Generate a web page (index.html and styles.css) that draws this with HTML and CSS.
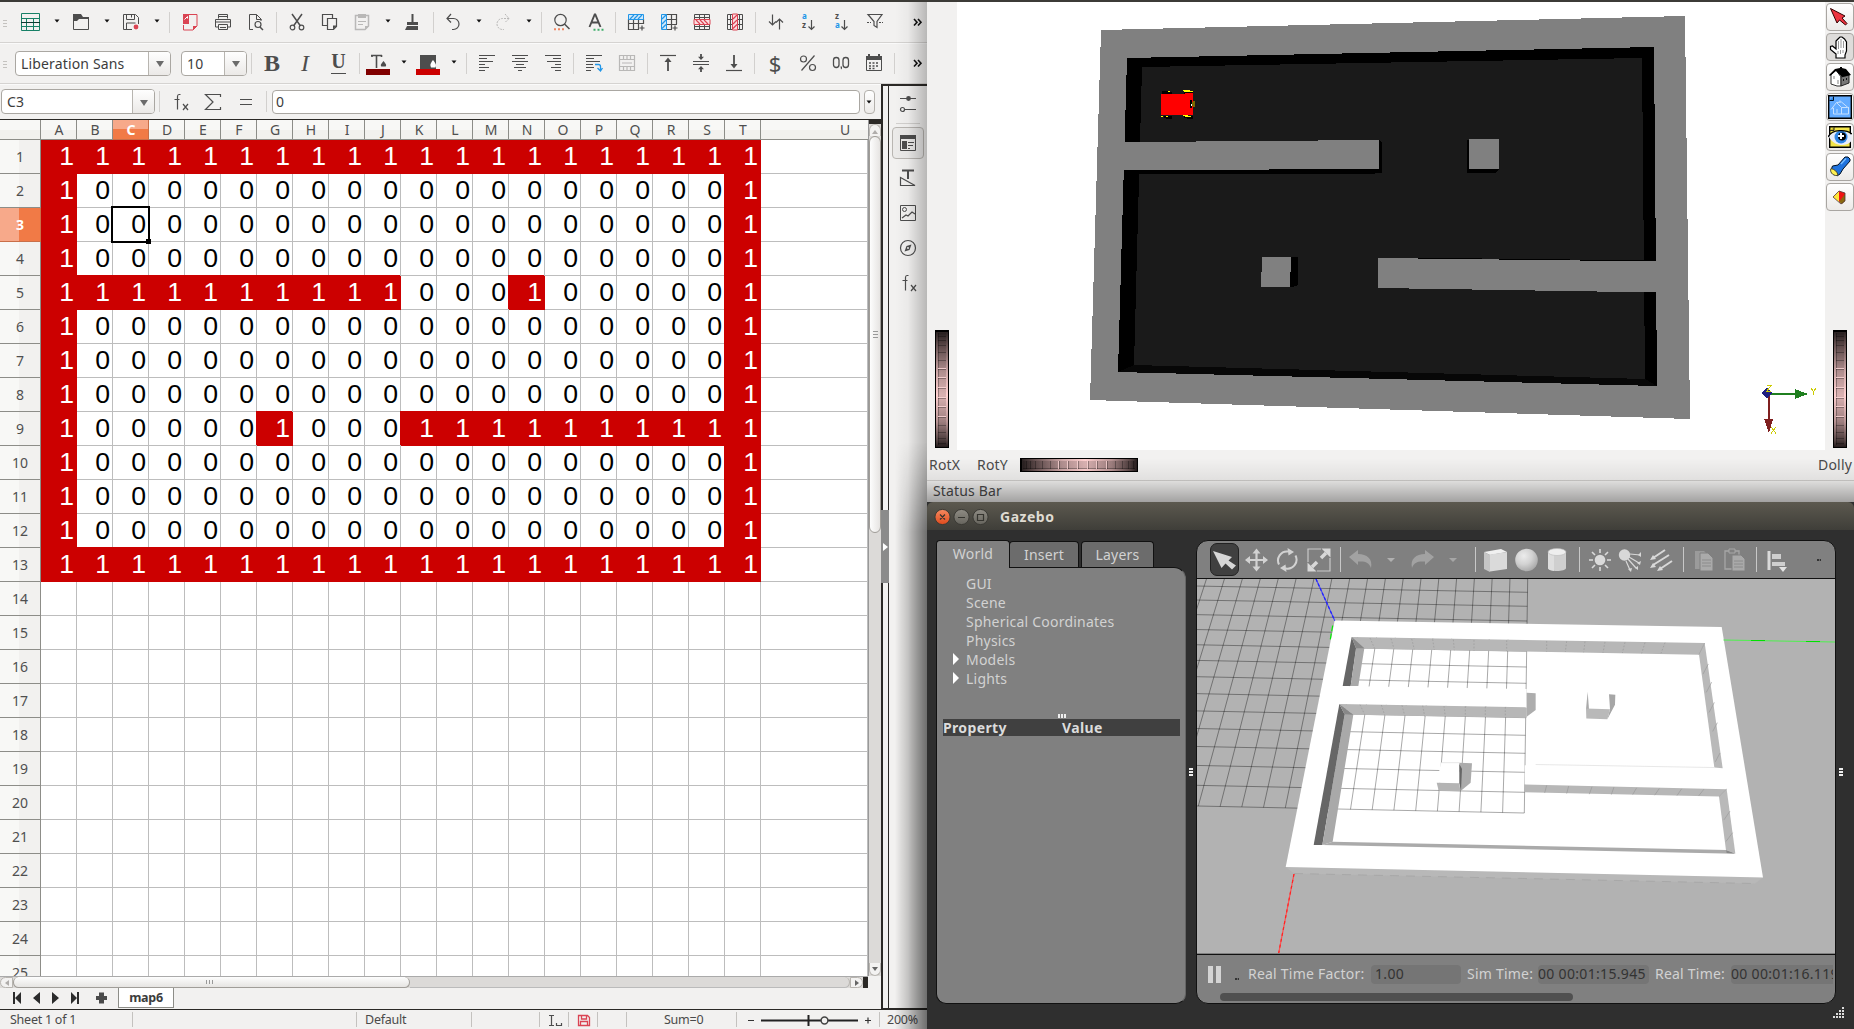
FILE: index.html
```html
<!DOCTYPE html>
<html lang="en">
<head>
<meta charset="utf-8">
<title>map6 - Calc, viewer and Gazebo</title>
<link rel="stylesheet" href="styles.css">
</head>
<body>
<svg class="defs" width="0" height="0">
  <defs>
    <linearGradient id="wheelV" x1="0" y1="0" x2="0" y2="1">
      <stop offset="0" stop-color="#2a2222"/><stop offset=".12" stop-color="#6b5555"/><stop offset=".35" stop-color="#cfa8a8"/>
      <stop offset=".55" stop-color="#ffd0d0"/><stop offset=".78" stop-color="#b89494"/><stop offset=".94" stop-color="#5a4747"/><stop offset="1" stop-color="#241c1c"/>
    </linearGradient>
    <radialGradient id="ball" cx=".38" cy=".32" r=".75"><stop offset="0" stop-color="#ececec"/><stop offset=".5" stop-color="#d2d2d2"/><stop offset="1" stop-color="#a4a4a4"/></radialGradient>
    <linearGradient id="closeBtn" x1="0" y1="0" x2="0" y2="1"><stop offset="0" stop-color="#f58a60"/><stop offset="1" stop-color="#df4a1c"/></linearGradient>
    <linearGradient id="greyBtn" x1="0" y1="0" x2="0" y2="1"><stop offset="0" stop-color="#8f8c84"/><stop offset="1" stop-color="#66645d"/></linearGradient>
    <symbol id="dd" viewBox="0 0 8 24"><path d="M1.500 9.500h5l-2.500 3z" fill="#111"/></symbol>
    <symbol id="more" viewBox="0 0 18 24"><path d="M5 9l3 3.200L5 15.500M9 9l3 3.200L9 15.500" fill="none" stroke="#111" stroke-width="1.600"/></symbol>
    <symbol id="grip" viewBox="0 0 6 24"><path d="M0 10.500h4M0 13.500h4M0 16.500h4" stroke="#c4c2bf"/></symbol>
    <symbol id="fx" viewBox="0 0 24 24"><path d="M10.500 4.500H9Q7.500 4.500 7.500 6.500v13M4.500 9.500h5M13 14l5 6M18 14l-5 6" fill="none" stroke="#4d4d4d" stroke-width="1.200"/></symbol>
    <symbol id="wheel" viewBox="0 0 14 118">
      <rect width="14" height="118" fill="#000"/><rect x="1" y="2" width="12" height="115" fill="url(#wheelV)"/>
      <rect x="3" y="3" width="8" height="112" fill="#000" opacity=".14"/>
      <path d="M3 6.500h8M3 10.500h8M3 15.500h8M3 22.500h8M3 30.500h8M3 39.500h8M3 48.500h8M3 58.500h8M3 68.500h8M3 77.500h8M3 87.500h8M3 95.500h8M3 102.500h8M3 108.500h8M3 113.500h8M3.500 3v112" stroke="#000" stroke-opacity=".3" fill="none"/>
      <path d="M3 38.500h8M3 47.500h8M3 57.500h8M3 67.500h8M3 76.500h8M3 86.500h8" stroke="#ffdada" stroke-opacity=".8"/>
    </symbol>
  </defs>
</svg>

<main class="desktop">
<section class="calc">
  <div class="toolbar standard">
    <svg class="grip"><use href="#grip"/></svg>
    <svg class="ic" viewBox="0 0 24 24"><path d="M3.500 3.500h18v17h-18zM3 8.500h19M3 16.500h19M8.500 9v11M15.500 9v11" fill="none" stroke="#178066"/><path d="M3 12.500h19" stroke="#0c3a2f"/></svg>
    <svg class="dd"><use href="#dd"/></svg>
    <svg class="ic" viewBox="0 0 24 24"><path d="M4.500 7.500v12h15v-12z" fill="none" stroke="#4d4d4d"/><path d="M4 4h8l2 3h6v2H10L8 11H4z" fill="#4d4d4d"/></svg>
    <svg class="dd"><use href="#dd"/></svg>
    <svg class="ic" viewBox="0 0 24 24"><path d="M13 19.500H4.500v-15h12l3 3V14M7.500 5v4.500h8V5M12.500 5v2.500M7.500 19v-6h9" fill="none" stroke="#4d4d4d"/><circle cx="17" cy="17" r="2.400" fill="#da4453"/></svg>
    <svg class="dd"><use href="#dd"/></svg>
    <i class="sep"></i>
    <svg class="ic" viewBox="0 0 24 24"><path d="M10.500 4.500h8.500v11.500l-4 4H5.500V15" fill="none" stroke="#da4453"/><path d="M5 4h6v10H5zM15 20v-4h4z" fill="#da4453"/><path d="M6.500 9.500L9.500 6.500v2" stroke="#fff" fill="none"/></svg>
    <svg class="ic" viewBox="0 0 24 24"><path d="M7.500 8.500v-4h9v4M7.500 17h-3V9.500h15V17h-3M7.500 14.500h9v5h-9z" fill="none" stroke="#4d4d4d"/><path d="M8 6.500h8M4 12h16M9 17.500h6" stroke="#4d4d4d" stroke-width="1.200"/></svg>
    <svg class="ic" viewBox="0 0 24 24"><path d="M9 19.500H5.500v-15h7l4.500 4.500V11M12.500 4.500v5h5" fill="none" stroke="#4d4d4d"/><circle cx="14" cy="14.500" r="3" fill="none" stroke="#4d4d4d" stroke-width="1.200"/><path d="M16 17l3 3" stroke="#4d4d4d" stroke-width="1.500"/></svg>
    <i class="sep"></i>
    <svg class="ic" viewBox="0 0 24 24"><path d="M7 4l8.500 12M17 4L8.500 16" stroke="#4d4d4d" stroke-width="1.500"/><circle cx="7.500" cy="17.500" r="2.300" fill="none" stroke="#4d4d4d" stroke-width="1.200"/><circle cx="16.500" cy="17.500" r="2.300" fill="none" stroke="#4d4d4d" stroke-width="1.200"/></svg>
    <svg class="ic" viewBox="0 0 24 24"><path d="M9 15.500H4.500v-11h10V8M9.500 8.500h9v8l-3 3h-6z" fill="none" stroke="#4d4d4d" stroke-width="1.200"/><path d="M15 19.500v-4h4z" fill="#4d4d4d"/></svg>
    <svg class="ic" viewBox="0 0 24 24"><path d="M5.500 5.500h13V16l-3.500 3.500H5.500z" fill="none" stroke="#b9b8b7" stroke-width="1.500"/><path d="M8 4h8v4H8zM15 20v-4h4z" fill="#b9b8b7"/><path d="M8 11.500h8M8 14.500h5" stroke="#b9b8b7"/></svg>
    <svg class="dd"><use href="#dd"/></svg>
    <svg class="ic" viewBox="0 0 24 24"><path d="M12.500 4v9" stroke="#4d4d4d" stroke-width="2"/><path d="M7 12h11v3H7z" fill="#4d4d4d"/><path d="M7 16h11v4H5z" fill="#4d4d4d"/></svg>
    <i class="sep"></i>
    <svg class="ic" viewBox="0 0 24 24"><path d="M10 4L6 8.500l4 4M6 8.500h6.500a5.500 5.500 0 0 1 0 11H11" fill="none" stroke="#4d4d4d" stroke-width="1.200"/></svg>
    <svg class="dd"><use href="#dd"/></svg>
    <svg class="ic" viewBox="0 0 24 24"><path d="M14 4l4 4.500-4 4M18 8.500h-6.500a5.500 5.500 0 0 0 0 11H13" fill="none" stroke="#b9b8b7" stroke-dasharray="2 1"/></svg>
    <svg class="dd"><use href="#dd"/></svg>
    <i class="sep"></i>
    <svg class="ic" viewBox="0 0 24 24"><circle cx="11.500" cy="10" r="5.700" fill="none" stroke="#4d4d4d" stroke-width="1.200"/><path d="M15.500 14l5 5" stroke="#4d4d4d" stroke-width="1.500"/><path d="M5 19.200h2M9 19.200h2M13 19.200h2" stroke="#f08763" stroke-width="2"/></svg>
    <svg class="ic" viewBox="0 0 24 24"><path d="M6.500 17L11.700 4.500h.6L17.500 17M8.500 12.500h7" fill="none" stroke="#4d4d4d" stroke-width="1.900"/><path d="M10.500 19.800h2M14.500 19.800h2M18.500 19.800h2" stroke="#3fae6a" stroke-width="2"/></svg>
    <i class="sep"></i>
    <svg class="ic" viewBox="0 0 24 24"><path d="M4.500 9v10.500H15M4 13.500h16M9.500 9v10.500M14.500 9v10.500M19.500 9v5M18 15.500v5M15.500 18h5" fill="none" stroke="#4d4d4d" stroke-width="1.200"/><path d="M4.500 4.500h15v5h-15z" fill="#cfe8fa" stroke="#2196e8"/><path d="M6 9l4-4M10 9l4-4M14 9l4-4" stroke="#2196e8" stroke-width="1.200"/></svg>
    <svg class="ic" viewBox="0 0 24 24"><path d="M9 4.500h10.500V14M9 9.500h11M9 14.500h11M9 19.500h6M14.500 4v15M18 15.500v5M15.500 18h5" fill="none" stroke="#4d4d4d" stroke-width="1.200"/><path d="M4.500 4.500h5v15h-5z" fill="#cfe8fa" stroke="#2196e8"/><path d="M5 9l4-4M5 14l4-4M5 18.500l4-4" stroke="#2196e8" stroke-width="1.200"/></svg>
    <svg class="ic" viewBox="0 0 24 24"><path d="M4.500 4.500h15v15h-15zM4 7.500h16M4 16.500h16M9.500 4v16M14.500 4v16" fill="none" stroke="#4d4d4d"/><path d="M4 9.500h16v5H4z" fill="#fbdfe2" stroke="#da4453"/><path d="M6 10l4 4M10 10l4 4M14 10l4 4" stroke="#da4453" stroke-width="1.200"/></svg>
    <svg class="ic" viewBox="0 0 24 24"><path d="M4.500 4.500h15v15h-15zM7.500 4v16M16.500 4v16M4 9.500h16M4 14.500h16" fill="none" stroke="#4d4d4d"/><path d="M9.500 4v16h5V4z" fill="#fbdfe2" stroke="#da4453"/><path d="M10 9l4-4M10 14l4-4M10 18.500l4-4" stroke="#da4453" stroke-width="1.200"/></svg>
    <i class="sep"></i>
    <svg class="ic" viewBox="0 0 24 24"><path d="M8.500 4.500v10M5 11.500l3.500 3.500 3.500-3.500M15.500 19.500v-10M12 12.500L15.500 9l3.500 3.500" fill="none" stroke="#4d4d4d" stroke-width="1.200"/></svg>
    <svg class="ic" viewBox="0 0 24 24"><text x="5" y="9" class="tiny blue">a</text><text x="5" y="18" class="tiny">z</text><path d="M14.500 10v9.500M11.500 16.500l3 3 3-3" fill="none" stroke="#4d4d4d" stroke-width="1.200"/></svg>
    <svg class="ic" viewBox="0 0 24 24"><text x="5" y="9" class="tiny">z</text><text x="5" y="18" class="tiny blue">a</text><path d="M14.500 10v9.500M11.500 16.500l3 3 3-3" fill="none" stroke="#4d4d4d" stroke-width="1.200"/></svg>
    <svg class="ic" viewBox="0 0 24 24"><path d="M5 4.500h14l-5 7v6l-3-2v-4z" fill="none" stroke="#4d4d4d" stroke-width="1.200"/><path d="M4 12.500h4M16 12.500h4" stroke="#4d4d4d" stroke-dasharray="2 1"/></svg>
    <svg class="more"><use href="#more"/></svg>
  </div>

  <div class="toolbar formatting">
    <svg class="grip"><use href="#grip"/></svg>
    <div class="combo font"><span>Liberation Sans</span><b></b></div>
    <div class="combo size"><span>10</span><b></b></div>
    <i class="sep"></i>
    <span class="glyph bold">B</span>
    <span class="glyph ital">I</span>
    <span class="glyph uline">U</span>
    <i class="sep"></i>
    <svg class="ic" viewBox="0 0 24 24"><path d="M5 4.500h11M10.500 4v13M6 4v2M15.500 4v2" fill="none" stroke="#4d4d4d" stroke-width="1.600"/><path d="M17.500 10c3 3.500 3 4 2.200 5.600h-4.400c-.8-1.600-.8-2.100 2.200-5.600z" fill="#4d4d4d"/><path d="M0 18h24v6H0z" fill="#800000"/></svg>
    <svg class="dd"><use href="#dd"/></svg>
    <svg class="ic" viewBox="0 0 24 24"><path d="M4 4h16v14H4z" fill="#4d4d4d"/><path d="M17 9c3 4 3.500 5 2.500 7.500h-4.500c-1-2.500-1-3.500 2-7.500z" fill="#fff"/><path d="M0 18h24v6H0z" fill="#cc0000"/></svg>
    <svg class="dd"><use href="#dd"/></svg>
    <i class="sep"></i>
    <svg class="ic" viewBox="0 0 24 24"><path d="M4 4.500h16M4 7.500h8M4 10.500h14M4 13.500h6M4 16.500h10M4 19.500h6" stroke="#4d4d4d" stroke-width="1.200"/></svg>
    <svg class="ic" viewBox="0 0 24 24"><path d="M4 4.500h16M7 7.500h10M4 10.500h16M8 13.500h8M6 16.500h12M10 19.500h4" stroke="#4d4d4d" stroke-width="1.200"/></svg>
    <svg class="ic" viewBox="0 0 24 24"><path d="M4 4.500h16M12 7.500h8M6 10.500h14M14 13.500h6M10 16.500h10M14 19.500h6" stroke="#4d4d4d" stroke-width="1.200"/></svg>
    <i class="sep"></i>
    <svg class="ic" viewBox="0 0 24 24"><path d="M4 4.500h16M4 7.500h8M4 10.500h14M4 13.500h7M4 16.500h8M4 19.500h5" stroke="#4d4d4d" stroke-width="1.200"/><path d="M13 13.500h3.500q2 0 2 2V19M15.500 17l3 3 2-3" fill="none" stroke="#2196e8" stroke-width="1.300"/></svg>
    <svg class="ic" viewBox="0 0 24 24"><path d="M4.500 4.500h15v15h-15zM4 8.500h16M4 15.500h16M8.500 4v5M12 4v5M15.500 4v5M8.500 15v5M12 15v5M15.500 15v5M7 12h10" fill="none" stroke="#b9b8b7" stroke-width="1.200"/></svg>
    <i class="sep"></i>
    <svg class="ic" viewBox="0 0 24 24"><path d="M4 4.500h16" stroke="#4d4d4d" stroke-width="1.200"/><path d="M12 8v12" stroke="#4d4d4d" stroke-width="1.800"/><path d="M12 6.500l3.500 4.500h-7z" fill="#4d4d4d"/></svg>
    <svg class="ic" viewBox="0 0 24 24"><path d="M4 10.500h16M4 13.500h16" stroke="#4d4d4d" stroke-width="1.200"/><path d="M12 3v4M12 17v4" stroke="#4d4d4d" stroke-width="1.800"/><path d="M12 9L9 5.800h6zM12 15l3 3.200H9z" fill="#4d4d4d"/></svg>
    <svg class="ic" viewBox="0 0 24 24"><path d="M4 19.500h16" stroke="#4d4d4d" stroke-width="1.200"/><path d="M12 4v12" stroke="#4d4d4d" stroke-width="1.800"/><path d="M12 17.500L8.500 13h7z" fill="#4d4d4d"/></svg>
    <i class="sep"></i>
    <span class="glyph cur">$</span>
    <svg class="ic" viewBox="0 0 24 24"><path d="M18.500 4.500l-13 15" stroke="#4d4d4d" stroke-width="1.200"/><circle cx="7.500" cy="8" r="3" fill="none" stroke="#4d4d4d" stroke-width="1.200"/><circle cx="16.500" cy="16.500" r="3" fill="none" stroke="#4d4d4d" stroke-width="1.200"/></svg>
    <svg class="ic" viewBox="0 0 24 24"><rect x="4.500" y="6.500" width="5.500" height="10" rx="2.700" fill="none" stroke="#4d4d4d" stroke-width="1.300"/><rect x="14" y="6.500" width="5.500" height="10" rx="2.700" fill="none" stroke="#4d4d4d" stroke-width="1.300"/><path d="M11.500 15.500h1.500v2l-1 1z" fill="#4d4d4d"/></svg>
    <svg class="ic" viewBox="0 0 24 24"><path d="M4.500 5.500h15v14h-15z" fill="none" stroke="#4d4d4d"/><path d="M4 5h16v4H4zM6 3h2v3H6zM16 3h2v3h-2z" fill="#4d4d4d"/><path d="M7 12h2m1.500 0h2m1.500 0h2M7 15h2m1.500 0h2m1.500 0h2M7 17.500h2m1.500 0h2" stroke="#4d4d4d" stroke-width="1.700"/></svg>
    <i class="sep"></i>
    <svg class="more"><use href="#more"/></svg>
  </div>

  <div class="workspace">
    <div class="editor">
      <div class="formula">
        <div class="combo name"><span>C3</span><b></b></div>
        <i class="sep"></i>
        <svg class="ic" viewBox="0 0 24 24"><use href="#fx"/></svg>
        <svg class="ic" viewBox="0 0 24 24"><path d="M19.500 7V4.500H4.500l7.500 7.500-7.500 7.500h15V17" fill="none" stroke="#4d4d4d" stroke-width="1.200"/></svg>
        <svg class="ic" viewBox="0 0 24 24"><path d="M6 9.500h12M6 14.500h12" stroke="#4d4d4d" stroke-width="1.200"/></svg>
        <i class="sep"></i>
        <div class="input">0</div>
        <div class="expand"><svg class="dd"><use href="#dd"/></svg></div>
      </div>
      <div class="sheetarea">
        <div class="sheet" id="sheet"></div>
        <div class="vscroll"><i class="split"></i><i class="btn up"></i><i class="thumb"></i><i class="trough"></i><i class="btn down"></i></div>
      </div>
      <div class="hscroll"><i class="btn left"></i><i class="thumb"></i><i class="trough"></i><i class="btn right"></i><i class="split"></i></div>
      <div class="tabs">
        <svg width="110" height="20" viewBox="0 0 110 20"><path d="M13 4h2v12h-2zM21 4v12l-6-6zM40 4v12l-7-6zM52 4v12l7-6zM71 4v12l6-6zM77 4h2v12h-2z" fill="#2c2c2c"/><path d="M99 4.500h5v3.500h3v4h-3v3.500h-5V12h-3V8h3z" fill="#4a4a4a"/></svg>
        <span class="tab">map6</span>
      </div>
    </div>
    <div class="divider"><i></i></div>
    <aside class="side">
      <svg class="ic" viewBox="0 0 24 24"><path d="M4 6.500h16M9 17.500h11" stroke="#4d4d4d" stroke-width="1.200"/><circle cx="12.500" cy="6.500" r="2.400" fill="#4d4d4d"/><circle cx="6.500" cy="17.500" r="2" fill="none" stroke="#4d4d4d" stroke-width="1.200"/></svg>
      <i class="rule"></i>
      <div class="deck"><svg class="ic" viewBox="0 0 24 24"><path d="M4.500 4.500h15v15h-15z" fill="none" stroke="#4d4d4d"/><path d="M4 4h16v4H4zM6 10h5v8H6z" fill="#4d4d4d"/><path d="M12 11.500h6M12 14.500h5M12 17.500h2" stroke="#4d4d4d"/></svg></div>
      <svg class="ic" viewBox="0 0 24 24"><path d="M6 4.500h12M12 4v9" stroke="#4d4d4d" stroke-width="2"/><path d="M4.500 11.500v8H19z" fill="none" stroke="#4d4d4d" stroke-width="1.200"/></svg>
      <svg class="ic" viewBox="0 0 24 24"><path d="M4.500 4.500h15v15h-15z" fill="none" stroke="#4d4d4d"/><circle cx="8.500" cy="8.500" r="2" fill="none" stroke="#4d4d4d"/><path d="M6 17l4-3 2 1 4-4 3 2" fill="none" stroke="#4d4d4d" stroke-width="1.200"/></svg>
      <svg class="ic" viewBox="0 0 24 24"><circle cx="12" cy="12" r="7.500" fill="none" stroke="#4d4d4d" stroke-width="1.200"/><path d="M15.500 8.500l-2 5.500-5 1.500 2-5.500z" fill="#4d4d4d"/><circle cx="12" cy="12" r="1" fill="#eee"/></svg>
      <svg class="ic" viewBox="0 0 24 24"><use href="#fx" x="2"/></svg>
    </aside>
  </div>

  <div class="status">
    <span>Sheet 1 of 1</span><i class="sep"></i><i class="sep"></i><span>Default</span><i class="sep"></i><i class="sep"></i>
    <svg width="18" height="16" viewBox="0 0 18 16"><path d="M2 3.500h5M4.500 3v11M2 13.500h5M9.500 11v2.500h5V11" fill="none" stroke="#4d4d4d" stroke-width="1.200"/></svg>
    <i class="sep"></i>
    <svg width="14" height="16" viewBox="0 0 14 16"><path d="M1.500 3.500h9l2 2v8h-11zM4.500 4v3h5V4M3.500 13v-3.500h7V13" fill="none" stroke="#da4453" stroke-width="1.300"/></svg>
    <i class="sep"></i><i class="sep"></i><span>Sum=0</span><i class="sep"></i>
    <svg width="128" height="18" viewBox="0 0 128 18"><path d="M2 9.500h6M119 9.500h6M122 6.500v6" stroke="#333" stroke-width="1.200"/><path d="M15 9.500h97M62.500 4v11" stroke="#222" stroke-width="2"/><circle cx="78.500" cy="9.500" r="3.400" fill="#f2f1f0" stroke="#444" stroke-width="1.500"/></svg>
    <i class="sep"></i><span>200%</span>
  </div>
  <div class="shade"></div>
</section>

<section class="right">
  <div class="viewer">
    <div class="stage">
      <div class="rail"><svg width="14" height="118"><use href="#wheel"/></svg></div>
      <svg class="scene" viewBox="957 2 868 448" shape-rendering="crispEdges">
        <path d="M1101 30L1685 16L1690 419L1090 400z" fill="#808080"/>
        <path d="M1127 58L1654 47L1657 386L1118 372z" fill="#000"/>
        <path d="M1134 365L1645 379L1657 386L1118 372z" fill="#070707"/>
        <path d="M1142 67L1642 58L1645 379L1134 365z" fill="#1a1a1a"/>
        <path d="M1124 170L1139 174H1367L1382 173V143L1379 140z" fill="#000"/>
        <path d="M1100 142.300L1379 140V169L1100 170.300z" fill="#808080"/>
        <path d="M1469 140h-2v33h29l3-4z" fill="#000"/><path d="M1469 139h30v30h-30z" fill="#808080"/>
        <path d="M1290 257h8v28l-6 2h-2z" fill="#000"/><path d="M1262 257h29l-1 30h-29z" fill="#808080"/>
        <path d="M1395 257.500L1656 260.500V262L1395 259z" fill="#000"/>
        <path d="M1378 258L1660 261.500V292.500L1378 288z" fill="#808080"/>
        <path d="M1162 91h6v1h4v2h-10zM1184 92h9v2h-9zM1164 116h8v3h-6v-1h-2zM1184 116h9v3h-6v-1h-3z" fill="#000"/>
        <path d="M1161 94h24v-1h8v22h-32z" fill="#f00"/>
        <path d="M1183 90h7v1h3v1h-9v-1h-1zM1168 91h2v1h-2zM1161 116h2v1h-2zM1166 116h2v1h-2zM1183 115h5v1h3v1h-6v-1h-2z" fill="#ff0"/>
        <path d="M1190 100h2v8h-2z" fill="#000"/><path d="M1192 102h1v-1h2v6h-2v-1h-1z" fill="#7a6a00"/><path d="M1191 104h1v2h-1z" fill="#fff"/>
        <path d="M1767 393h30v2h-30z" fill="#1f7f1f"/><path d="M1795 389l13 5-13 5z" fill="#1f7f1f"/>
        <path d="M1768 395h2v26h-2z" fill="#7f1f1f"/><path d="M1764 419h9l-4 14z" fill="#7f1f1f"/>
        <path d="M1761 393l6-6 5 6-5 6z" fill="#1f1f7f"/>
        <g fill="none" stroke="#cccc00"><path d="M1767 385.500h4l-4 5.500h4M1811 388l2.500 3.500 2.500-3.500M1813.500 391v4M1771 427l5 6.500M1776 427l-5 6.500"/></g>
      </svg>
      <div class="tools">
        <button><svg viewBox="0 0 24 24"><path d="M2.500 3.500L17 11l-3 2 5 5.500-1.500 1.500-6-5-2.500 3z" fill="#ee3340" stroke="#300"/></svg></button>
        <button class="on"><svg viewBox="0 0 24 24"><path d="M8 19l-5.500-4.500v-3l2-.5 3.500 3V6l2-2 2-2h2l2.500 2 2 3v9L17 20v3H8z" fill="#fff" stroke="#000" stroke-width="1.200"/><path d="M10.500 6v8M13 4v9M15.500 6v7M10 16v3M12.500 15v4M15 15v3" stroke="#999"/></svg></button>
        <button><svg viewBox="0 0 24 24"><path d="M3 10l5-5 5 7v9H9l-6-2z" fill="#fff" stroke="#333"/><path d="M13 12l8-2v8l-8 3z" fill="#777" stroke="#222"/><path d="M1 10l6-6 5-1V2h2v1l4 1 5 6-9 2-6-6-6 5z" fill="#000"/><path d="M5 11h2v3H5zM9 15h2v4H9z" fill="#c0c0c0"/><path d="M15 14h1v2h-1zM18 13h1v2h-1z" fill="#111"/></svg></button>
        <button><svg viewBox="0 0 24 24"><path d="M.7.7h22.600v22.600H.7z" fill="#62abff" stroke="#000" stroke-width="1.400"/><path d="M1.500 5.500h4v-4" fill="#2f86e6" stroke="#012"/><path d="M3 14.500l5.500-7 5-.5 7 6M12 7V5.500M4 13l1.500 0v6h15v-7M8.500 7.500l5 5h6M13.500 12.500V19M9 18v-4" fill="none" stroke="#c5e0ff"/></svg></button>
        <button><svg viewBox="0 0 24 24"><path d="M1.700 1.700h20.600v20.600H1.700z" fill="#f2e44a" stroke="#000" stroke-width="1.400"/><path d="M2 5.500h4V2" fill="#c8b820" stroke="#222"/><path d="M1 12c3-7 17-8 22.500-2v6c-5 6-17 6-22.500-4z" fill="#e8ecf8"/><circle cx="13" cy="12" r="6.500" fill="#2f86e6"/><circle cx="14" cy="11.500" r="4" fill="#000"/><path d="M12 8h2v2h2v2h-2v2h-2v-2h-2v-2h2z" fill="#fff"/><path d="M0 12C4 4 18 4 24 9" fill="none" stroke="#000" stroke-width="1.300"/></svg></button>
        <button><svg viewBox="0 0 24 24"><path d="M10 10l7-8h3l2 2v2l-7 8-3 5-3 2-6-6 1.500-4z" fill="#1f73de" stroke="#012"/><path d="M3 13.500c4 1 6 3 7 6.500-3 2-9-2-7-6.500z" fill="#fff050" stroke="#443"/><path d="M13 9l5-5.500" stroke="#7cc0ff" stroke-width="1.300"/></svg></button>
        <button><svg viewBox="0 0 24 24"><path d="M5 12l6-6v11z" fill="#ffe53a"/><path d="M11 6l6 2v6l-6 3z" fill="#f01414"/><path d="M11 17l6-8v7l-3 3z" fill="#8a6a10"/><path d="M5 12l6-6 6 2v8l-4 3z" fill="none" stroke="#533" stroke-width=".8"/></svg></button>
        <svg class="dolly" width="14" height="118"><use href="#wheel"/></svg>
      </div>
    </div>
    <div class="wheels"><span>RotX</span><span>RotY</span><svg width="118" height="14" viewBox="0 0 118 14"><use href="#wheel" width="14" height="118" transform="translate(0 14) rotate(-90)"/></svg><span class="dl">Dolly</span></div>
    <div class="statusbar">Status Bar</div>
    <div class="fade"></div>
  </div>

  <div class="gazebo">
    <div class="title">
      <svg width="60" height="18" viewBox="0 0 60 18"><circle cx="8.500" cy="9" r="7.600" fill="url(#closeBtn)" stroke="#3a3934"/><circle cx="27.500" cy="9" r="7.600" fill="url(#greyBtn)" stroke="#3a3934"/><circle cx="46.500" cy="9" r="7.600" fill="url(#greyBtn)" stroke="#3a3934"/><path d="M6 6.500l5 5M11 6.500l-5 5M24 9.500h7M43.500 6.500h6v6h-6z" fill="none" stroke="#35342f" stroke-width="1.200"/></svg>
      <b>Gazebo</b>
    </div>
    <div class="gbody">
      <div class="left">
        <div class="gtabs"><span class="cur">World</span><span>Insert</span><span>Layers</span></div>
        <div class="panel">
          <ul class="tree"><li>GUI</li><li>Scene</li><li>Spherical Coordinates</li><li>Physics</li><li class="has">Models</li><li class="has">Lights</li></ul>
          <i class="dots h"></i>
          <div class="props"><span>Property</span><span>Value</span></div>
        </div>
      </div>
      <i class="dots v"></i>
      <div class="render">
        <div class="gtool">
          <span class="sel"><svg viewBox="0 0 27 31"><path d="M2 7l19 6-3.500 3.500 7.500 5-4 4-6.500-6-4 4.500z" fill="#d6d6d6"/></svg></span>
          <svg class="ic" viewBox="0 0 24 24"><path d="M12.500 4v16M4 12h17" stroke="#d2d2d2" stroke-width="2.200"/><path d="M12.500 .5l4 5h-8zM12.500 23.500l4-5h-8zM1 12l5-4v8zM24 12l-5-4v8z" fill="#d2d2d2"/></svg>
          <svg class="ic" viewBox="0 0 24 24"><path d="M4 16.500A9 9 0 0 1 13 3.500M20.500 7.500A9 9 0 0 1 11 20.500" fill="none" stroke="#d2d2d2" stroke-width="2"/><path d="M12.500 0l6.500 4-5.500 3.500zM11.500 24l-6.500-4 5.500-3.500z" fill="#d2d2d2"/></svg>
          <svg class="ic" viewBox="0 0 24 24"><path d="M14 1H1v13M10 23h13V10" fill="none" stroke="#c8c8c8" stroke-width="1.200"/><path d="M14 10l5-5M10 14l-5 5" stroke="#d8d8d8" stroke-width="3.500"/><path d="M23.500 .5v9l-9-9zM.5 23.500v-9l9 9z" fill="#d8d8d8"/></svg>
          <i></i>
          <svg class="ic" viewBox="0 0 24 24"><path d="M0 9l9-7v4c9 0 15 5 13 14-2-6-6-7-13-6.500V17z" fill="#a2a2a2"/></svg>
          <svg class="gdd" viewBox="0 0 8 24"><path d="M0 10h8l-4 4z" fill="#b0b0b0"/></svg>
          <svg class="ic" viewBox="0 0 24 24"><path d="M24 9l-9-7v4C6 6 0 11 2 20c2-6 6-7 13-6.500V17z" fill="#a2a2a2"/></svg>
          <svg class="gdd" viewBox="0 0 8 24"><path d="M0 10h8l-4 4z" fill="#a6a6a6"/></svg>
          <i></i>
          <svg class="ic" viewBox="0 0 24 24"><path d="M0 4l17-3 6 3-17 3z" fill="#f0f0f0"/><path d="M0 4l6 3v17l-6-3z" fill="#c6c6c6"/><path d="M6 6.500l17-2.500v17L6 23.500z" fill="#dadada"/></svg>
          <svg class="ic" viewBox="0 0 24 24"><circle cx="11.500" cy="12" r="11.300" fill="url(#ball)"/></svg>
          <svg class="ic" viewBox="0 0 24 24"><path d="M3 4v16c0 4 18 4 18 0V4z" fill="#cfcfcf"/><path d="M3 4v16c0 1.500 3 2.500 6 3V6z" fill="#dedede"/><ellipse cx="12" cy="4" rx="9" ry="3.500" fill="#eee" stroke="#bbb" stroke-width=".6"/></svg>
          <i></i>
          <svg class="ic" viewBox="0 0 24 24"><circle cx="12" cy="12" r="5.300" fill="#dadada"/><path d="M12 1v4M12 19v4M1 12h4M19 12h4M4 4l3 3M17 17l3 3M20 4l-3 3M7 17l-3 3" stroke="#dadada" stroke-width="1.600"/></svg>
          <svg class="ic" viewBox="0 0 24 24"><circle cx="6.500" cy="7" r="5.700" fill="#d8d8d8"/><path d="M12 6l10 1M11 9l10 6M10 11l8 9M8 13l4 9" stroke="#d8d8d8" stroke-width="1.200"/><path d="M23 4v5l-3-2zM23 13l-1 4-3-2zM20 18v4l-3-2zM14 20l-1 4-3-3z" fill="#d8d8d8"/></svg>
          <svg class="ic" viewBox="0 0 24 24"><path d="M16 2L4 10M20 7L4 17M23 13L11 21" stroke="#d8d8d8" stroke-width="2"/><path d="M1 12l3-5 3 4zM1 20l3-5 3 4zM8 23l3-5 3 4z" fill="#d8d8d8"/></svg>
          <i></i>
          <svg class="ic" viewBox="0 0 24 24"><path d="M3 3h9l4 4v14H3z" fill="#9b9b9b"/><path d="M8 5h8l5 5v13H8z" fill="#aaa" stroke="#808080"/><path d="M10 12h9M10 15h9M10 18h9" stroke="#8c8c8c"/></svg>
          <svg class="ic" viewBox="0 0 24 24"><path d="M2 3h14v18H2z" fill="none" stroke="#a6a6a6" stroke-width="1.300"/><path d="M6 1h6v4H6z" fill="#808080" stroke="#a6a6a6"/><path d="M9 7h9l4 4v12H9z" fill="#a9a9a9" stroke="#808080"/><path d="M11 13h9M11 16h9M11 19h9" stroke="#8c8c8c"/></svg>
          <i></i>
          <svg class="ic" viewBox="0 0 24 24"><path d="M3 3v19" stroke="#dadada" stroke-width="3"/><path d="M6 6h9v5H6zM6 14h13v4H6z" fill="#cfcfcf"/><path d="M13 19h8l-4 5z" fill="#e4e4e4"/></svg>
          <em></em>
        </div>
        <svg class="world" viewBox="1197 579 638 374">
          <defs>
            <clipPath id="floor"><path d="M1352 637L1704.700 643L1735 853.600L1313.700 845z"/></clipPath>
          </defs>
          <path d="M1197 579h638v374h-638z" fill="#b2b2b2"/>
          <g class="grid" id="gridOut"></g>
          <path d="M1285.700 867L1294 873.500L1755 883.500L1763 877.500z" fill="#b8b8b8"/>
          <path d="M1294 873.500L1755 883.500" stroke="#a2a2a2" stroke-dasharray="9 7" fill="none" stroke-width=".7"/>
          <path d="M1334.700 620.500L1721.700 627L1763 877.500L1285.700 867z" fill="#fff"/>
          <g clip-path="url(#floor)"><g class="grid in" id="gridIn"></g></g>
          <g transform="translate(1180 570) scale(.33333)">
            <path d="M515 201L1574 219L1557 254L553 236L528 235z" fill="#b7b7b7"/>
            <path d="M515 201L528 235L512 348H488z" fill="#666"/><path d="M515 201L553 235L535 348H512L528 235z" fill="#a9a9a9"/><path d="M515 201L553 235L528 235z" fill="#888"/>
            <path d="M488 348L1040 357V412L478 402L440 380z" fill="#fff"/>
            <path d="M478 402L1040 412V443L520 434z" fill="#b7b7b7"/>
            <path d="M478 402L494 433L427 825H401z" fill="#666"/><path d="M478 402L520 434L458 815L427 825L494 433z" fill="#a9a9a9"/><path d="M478 402L520 434L494 433z" fill="#888"/>
            <path d="M1040 368L1067 370V420L1040 440z" fill="#adadad"/>
            <path d="M427 825L458 815L1640 840L1665 851z" fill="#aaa"/>
            <path d="M783 578L838 580V640L770 638z" fill="#fff"/><path d="M783 578h55" stroke="#ddd" stroke-width="2"/>
            <path d="M838 578L876 580L872 638L843 662z" fill="#acacac"/><path d="M838 582L846 596L843 662L838 640z" fill="#666"/><path d="M770 638L838 640L841 664L776 662z" fill="#b4b4b4"/>
            <path d="M570 204l14 32M633 206l9 30M695 207l8 31M758 208l5 32M820 209l3 32M882 210v32M980 211v32M1100 213v32M1160 214l-4 32M1215 215l-4 32M1275 216l-6 32M1335 217l-8 32M1395 218l-10 32M1455 218l-12 32M540 404l14 30M604 405l10 30M666 406l8 30M728 407l6 32M792 408l4 32M856 409v32M916 410v32M976 411v32" stroke="#999" stroke-width="2" stroke-dasharray="5 5" fill="none"/>
          </g>
          <g transform="translate(1380 500) scale(.33333 .33738)">
            <path d="M974 424L1028 795L1003 793L957 458z" fill="#b9b9b9"/>
            <path d="M434 786L1003 794L1040 857L434 843z" fill="#fff"/><path d="M467 784L1003 793" stroke="#dcdcdc" stroke-width="2"/>
            <path d="M434 843L1040 857L1017 879L434 866z" fill="#b7b7b7"/>
            <path d="M1040 857L1066 1048L1038 1038L1017 879z" fill="#b9b9b9"/>
            <path d="M1038 1038L1066 1048L1040 1046z" fill="#888"/>
            <path d="M623 568L627 620H618z" fill="#aaa"/><path d="M687 576L706 577L705 607L682 650L690 620z" fill="#a6a6a6"/><path d="M618 618L690 620L682 650L619 648z" fill="#b9b9b9"/>
            <path d="M974 424L957 458M985 486l-16 30M995 540l-16 30M1003 600l-16 30M1012 660l-14 26M1020 750l-14 26M500 846l-6 22M566 848l-6 22M636 850l-8 22M702 851l-8 22M770 853l-12 20M838 855l-14 20M905 856l-14 20M972 857l-16 20M1040 857l-23 22M1050 922l-18 26M1058 986l-20 26" stroke="#999" stroke-width="2" fill="none"/>
          </g>
          <g fill="none" stroke-width="1.200">
            <path d="M1316 579L1334.700 620.500" stroke="#5050f0"/><path d="M1316 579L1334.700 620.500" stroke="#2020ff" stroke-dasharray="3 2"/>
            <path d="M1332.700 625.500L1330 641" stroke="#0e0" stroke-dasharray="6 2"/>
            <path d="M1723.500 640L1835 642" stroke="#4ff04f"/><path d="M1751 640.500h14M1806 641.500h14" stroke="#00e000"/>
            <path d="M1294 874L1278.700 953" stroke="#ff5050"/><path d="M1294 874L1278.700 953" stroke="#f22" stroke-dasharray="3 3"/>
          </g>
        </svg>
        <div class="gtime">
          <div class="row"><i class="pause"></i><em></em><label>Real Time Factor:</label><span class="f1">1.00</span><label>Sim Time:</label><span class="f2">00 00:01:15.945</span><label>Real Time:</label><span class="f3">00 00:01:16.119</span></div>
          <div class="bar"></div>
        </div>
      </div>
      <i class="dots v"></i>
    </div>
    <svg class="resize" width="11" height="12" viewBox="0 0 11 12"><path d="M9 0h2v2H9zM6 3h2v2H6zM9 3h2v2H9zM3 6h2v2H3zM6 6h2v2H6zM9 6h2v2H9zM0 9h2v2H0zM3 9h2v2H3zM6 9h2v2H6zM9 9h2v2H9z" fill="#ddd"/></svg>
  </div>
</section>
</main>
<script src="main.js"></script>
</body>
</html>
```
FILE: styles.css
```css
*{box-sizing:border-box}
body{margin:0;width:1854px;height:1029px;overflow:hidden;background:#3c3b37;font:14px "Noto Sans","Open Sans",sans-serif;color:#4a4a4a}
.defs{position:absolute}
svg{display:block}
i,em{display:block}
.desktop{display:flex;padding-top:2px;height:1029px}
.calc{width:927px;background:#f2f1f0;display:flex;flex-direction:column;position:relative}
.toolbar{display:grid;padding-left:3px;align-items:center;border-bottom:1px solid #d5d3d1;box-shadow:0 1px #fafafa;flex:none}
.standard{height:41px;grid-template-columns:15px 35px 16px 34px 16px 34px 16px 9px 33px 33px 32px 9px 33px 32px 34px 16px 33px 8px 34px 16px 34px 16px 8px 34px 32px 9px 33px 33px 33px 32px 9px 33px 33px 33px 46px 18px}
.formatting{height:41px;grid-template-columns:12px 166px 70px 9px 33px 33px 33px 7px 34px 16px 34px 16px 9px 33px 33px 32px 9px 33px 32px 9px 33px 33px 32px 9px 33px 33px 33px 32px 15px 18px}
.ic{width:24px;height:24px}
.dd{width:8px;height:24px}
.grip{width:6px;height:24px}
.more{width:18px;height:24px}
.sep{width:1px;height:21px;background:#d2d0ce}
.tiny{font:bold 8px/8px "Noto Sans",sans-serif;fill:#4d4d4d}
.tiny.blue{fill:#2196e8}
.combo{height:25px;border:1px solid #aaa7a2;border-radius:4px;background:#fff;display:flex;justify-content:space-between;line-height:23px;color:#3c3c3c;overflow:hidden;letter-spacing:.15px}
.combo span{padding-left:5px}
.combo b{width:22px;border-left:1px solid #b8b5b0;background:linear-gradient(#fefefe,#ebe9e7);display:flex;align-items:center;justify-content:center}
.combo b::after{content:"";border:4px solid transparent;border-top:6px solid #6b6b6b;border-bottom:0;margin-top:2px}
.combo.font{width:156px}
.combo.size{width:66px}
.combo.name{width:154px}
.glyph{width:24px;height:24px;text-align:center;font:bold 24px/24px "Liberation Serif",serif;color:#4d4d4d}
.glyph.ital{font-style:italic;font-weight:400}
.glyph.uline{font-size:20px;line-height:19px;border-bottom:1px solid #4d4d4d;width:15px;height:22px;margin-left:5px}
.glyph.cur{font:22px/24px "Noto Sans",sans-serif}
.workspace{display:flex;height:926px;flex:none}
.editor{width:881px;display:flex;flex-direction:column}
.formula{height:36px;padding:0 0 0 1px;display:grid;grid-template-columns:158px 11px 31px 33px 32px 6px 592px 17px;align-items:center;border-bottom:1px solid #2b2926;flex:none}
.input{width:588px;height:24px;border:1px solid #aaa7a2;border-radius:4px;background:#fff;line-height:22px;padding-left:3px;color:#3c3c3c}
.expand{width:11px;height:24px;border:1px solid #b3b0ab;border-radius:4px;background:linear-gradient(#fff,#eceae8)}
.sheetarea{display:flex;height:856px;overflow:hidden;flex:none}
.sheet{width:868px;display:grid;grid-template-columns:41px repeat(20,36px) 107px;grid-template-rows:20px;grid-auto-rows:34px;background:#fff;overflow:hidden}
.corner,.ch{background:linear-gradient(#f8f8f6 0 50%,#f2f1ee 50%);border:solid #8d8d88;border-width:0 1px 1px 0;text-align:center;line-height:20px;color:#4f4f4f;padding-left:1px}
.ch.last{padding-left:61px;border-right:0}
.ch.sel{background:linear-gradient(#f7a98a 0 48%,#f17a46 48%);color:#fff;font-weight:bold;border-color:#c96f49}
.rh{background:linear-gradient(90deg,#f8f8f6 0 19px,#f2f1ef 19px);border:solid #8d8d88;border-width:0 1px 1px 0;text-align:center;line-height:33px;color:#4f4f4f}
.rh.sel{background:linear-gradient(90deg,#f7a98a 0 19px,#f17a46 19px);color:#fff;font-weight:bold;border-color:#c96f49}
.c{border:solid #bdbdbd;border-width:0 1px 1px 0;font:26.67px/33px "Liberation Sans",Arial,sans-serif;color:#000;text-align:right;padding-right:2px;position:relative}
.c.wall{background:#c00;border-color:#c00;color:#fff;box-shadow:-1px -1px #c00}
.c.rim{box-shadow:none}
.c.active::before{content:"";position:absolute;inset:-2px;border:2px solid #000;z-index:2}
.c.active::after{content:"";position:absolute;right:-3px;bottom:-3px;width:5px;height:5px;background:#000;z-index:3}
.vscroll{width:13px;border-left:1px solid #999;display:flex;flex-direction:column;background:#dcdad8;margin-top:-1px}
.vscroll .split{height:5px;background:#2b2926;flex:none}
.btn{background:#f3f2f1;border:1px solid #b8b5b0;position:relative}
.vscroll .btn{height:12px;flex:none}
.vscroll .up{border-radius:6px 6px 0 0;border-bottom:0}
.vscroll .down{border-radius:0 0 6px 6px;border-top:0;height:13px}
.vscroll .thumb{height:397px;border:1px solid #a09d98;border-radius:6px;background:repeating-linear-gradient(#999 0 1px,transparent 1px 3px) 50% 194px/5px 8px no-repeat,linear-gradient(90deg,#fdfdfd,#e6e4e2);flex:none}
.vscroll .trough{flex:1}
.btn::after{content:"";position:absolute;border:3px solid transparent}
.up::after{border-bottom:4px solid #b0adab;border-top:0;left:2px;top:5px}
.down::after{border-top:4px solid #666;border-bottom:0;left:2px;top:4px}
.hscroll .left::after{border-right:4px solid #b0adab;border-left:0;left:4px;top:2px}
.hscroll .right::after{border-left:4px solid #666;border-right:0;left:4px;top:2px}
.hscroll{display:flex;width:868px;height:12px;background:#dcdad8;border-top:1px solid #aaa;flex:none}
.hscroll .left{width:13px;border-radius:6px 0 0 6px}
.hscroll .thumb{width:397px;border:1px solid #a09d98;border-top:0;border-radius:6px;background:repeating-linear-gradient(90deg,#999 0 1px,transparent 1px 3px) 192px 50%/8px 4px no-repeat,linear-gradient(#fdfdfd,#e6e4e2)}
.hscroll .trough{flex:1;border-bottom:1px solid #bbb;border-right:1px solid #b8b5b0;border-radius:0 6px 6px 0}
.hscroll .btn.right{width:13px;border-radius:0 6px 6px 0;display:block}
.hscroll .split{width:5px;background:#2b2926}
.tabs{height:22px;display:flex;border-bottom:1px solid #2b2926;flex:none}
.tabs svg{margin-right:8px}
.tab{width:56px;height:20px;background:#fff;border:1px solid #8d8d88;border-top:0;font:bold 12.500px/20px "Noto Sans",sans-serif;letter-spacing:-.3px;text-align:center;color:#3c3c3c}
.divider{width:8px;border:solid #2b2926;border-width:2px 1px 2px 2px;position:relative}
.divider i{position:absolute;left:-2px;top:424px;width:8px;height:73px;background:#8b8b8b}
.divider i::after{content:"";position:absolute;left:2px;top:33px;border:4px solid transparent;border-left:5px solid #fff;border-right:0}
.side{width:38px;border:solid #2b2926;border-width:2px 0;display:flex;flex-direction:column;align-items:center;gap:11px;padding-top:6px;background:#f2f1f0}
.rule{width:24px;height:1px;background:#d2d0ce;margin:-4px 0 -8px}
.deck{border:1px solid #b9b6b2;border-radius:4px;width:32px;height:32px;display:grid;place-items:center;margin:0 0 -4px;background:#ebeae9}
.status{padding-left:10px;display:grid;grid-template-columns:122px 224px 9px 106px 68px 8px 21px 9px 20px 29px 38px 72px 10px 133px 8px 40px;align-items:center;font-size:12.500px;letter-spacing:-.25px;line-height:18px;white-space:nowrap;flex:1}
.status .sep{height:15px;background:#c4c2bf}
.shade{position:absolute;right:0;top:0;width:32px;bottom:0;background:linear-gradient(90deg,transparent,rgba(0,0,0,.03) 40%,rgba(0,0,0,.24));pointer-events:none}
.shade::after{content:"";position:absolute;inset:440px 0 0 0;background:linear-gradient(90deg,transparent,rgba(0,0,0,.4));-webkit-mask:linear-gradient(transparent,#000 90px);mask:linear-gradient(transparent,#000 90px)}
section.right{width:927px;display:flex;flex-direction:column}
.viewer{height:500px;background:#f2f1f0;position:relative}
.stage{display:flex;height:448px}
.rail{width:30px;padding:328px 0 0 8px}
.scene{width:868px;height:448px;background:#fff}
.tools{width:29px;padding:1px 0 0 1px;display:flex;flex-direction:column;gap:2px}
.tools button{width:28px;height:28px;padding:1px;border:1px solid #a9a6a2;border-radius:4px;background:linear-gradient(#fff,#eceae8);flex:none}
.tools button.on{background:#dedcda}
.tools button svg{width:24px;height:24px}
.dolly{margin:117px 0 0 7px;flex:none}
.wheels{height:30px;display:flex;align-items:center;padding-left:2px}
.wheels span{width:48px;margin-top:-2px;letter-spacing:.2px}
.wheels span+span{width:43px}
.wheels .dl{margin-left:auto;width:36px}
.statusbar{height:22px;border-top:1px solid #cfcdcb;line-height:19px;padding-left:6px;letter-spacing:.15px}
.fade{position:absolute;left:0;right:0;bottom:0;height:44px;background:linear-gradient(transparent,rgba(0,0,0,.07) 50%,rgba(0,0,0,.33))}
.gazebo{height:527px;background:#2f2f2f;position:relative}
.title{height:28px;background:linear-gradient(#5c594f,#3f3e39);border-radius:6px 6px 0 0;display:flex;align-items:center;padding:1px 0 0 7px}
.title b{color:#dfdbd2;font:bold 14px "Noto Sans",sans-serif;margin-left:6px;letter-spacing:.5px}
.gbody{display:flex;padding:10px 0 0 9px;color:#d2d2d2;letter-spacing:.22px}
.gazebo .left{width:250px;flex:none}
.gtabs{display:flex;height:27px;align-items:flex-end;gap:2px}
.gtabs span{height:26px;width:73px;border:1px solid #111;border-bottom:0;border-radius:4px 4px 0 0;background:#6c6c6c;text-align:center;line-height:26px}
.gtabs .cur{height:28px;background:#808080;margin:0 -3px -1px 0;line-height:26px;width:74px;z-index:1}
.gtabs .cur+span{width:70px}
.panel{height:437px;background:#808080;border:1px solid #111;border-right-color:#666;border-radius:0 12px 10px 10px;padding:6px 5px 0 6px}
.tree{list-style:none;margin:0;padding:0 0 0 23px;height:140px}
.tree li{height:19px;line-height:19px;position:relative}
.tree li.has::before{content:"";position:absolute;left:-13px;top:3px;border:6px solid transparent;border-left:6px solid #fff;border-right:0}
.dots.h{width:8px;height:4px;margin:0 0 1px 115px;background:repeating-linear-gradient(90deg,#eee 0 2px,transparent 2px 3px)}
.props{height:17px;background:#404040;display:flex;font-weight:bold;line-height:17px;color:#dcdcdc;letter-spacing:.35px}
.props span:first-child{width:119px}
.dots.v{width:4px;height:8px;margin:228px 3px 0 3px;flex:none;background:repeating-linear-gradient(#eee 0 2px,transparent 2px 3px)}
.render{width:640px;height:464px;border:1px solid #111;border-radius:12px;background:#808080;overflow:hidden;flex:none}
.gtool{height:38px;border-bottom:1px solid #111;padding-left:13px;display:grid;grid-template-columns:34px 31px 32px 33px 9px 38px 23px 39px 26px 9px 31px 30px 34px 9px 30px 31px 34px 9px 31px 33px 10px 51px 10px;align-items:center}
.gtool .sel{width:29px;height:33px;border:1px solid #222;border-radius:7px;background:#404040}
.gtool .sel svg{width:27px;height:31px}
.gtool i{width:1px;height:25px;background:#c8c8c8}
.gtool em,.gtime em{width:4px;height:2px;background:repeating-linear-gradient(90deg,#333 0 2px,#666 2px 3px);flex:none}
.gdd{width:8px;height:24px}
.world{width:638px;height:374px}
.grid{stroke:#000;stroke-opacity:.36;stroke-width:1;fill:none}
.grid.in{stroke-opacity:.38;stroke-width:.9}
.gtime{border-top:1px solid #111;height:49px;margin-top:1px}
.row{display:flex;align-items:center;width:636px;overflow:hidden;height:38px;white-space:nowrap;padding-left:11px}
.row .pause{width:13px;height:17px;border:solid #d4d4d4;border-width:0 5px;flex:none}
.row em{margin:9px 9px 0 14px}
.row label{width:123px;flex:none;margin-top:-1px}
.row span{height:19px;line-height:18px;border-radius:4px;background:#757575;color:#333;flex:none;letter-spacing:.32px}
.row .f1{width:90px;padding-left:4px;margin-right:6px}
.row .f1+label{width:71px}
.row .f2{width:111px;margin-right:6px}
.row .f2+label{width:76px}
.row .f3{width:120px}
.bar{width:353px;height:8px;border-radius:4px;background:#505050;margin-left:23px}
.resize{position:absolute;right:10px;bottom:10px}
```
FILE: main.js
```js
// Occupancy map shown in the spreadsheet: 1 = wall, 0 = free
const map = [
  '11111111111111111111',
  '10000000000000000001',
  '10000000000000000001',
  '10000000000000000001',
  '11111111110001000001',
  '10000000000000000001',
  '10000000000000000001',
  '10000000000000000001',
  '10000010001111111111',
  '10000000000000000001',
  '10000000000000000001',
  '10000000000000000001',
  '11111111111111111111'
];
const sheet = document.getElementById('sheet');
function add(cls, text) {
  const d = document.createElement('div');
  d.className = cls;
  d.textContent = text;
  sheet.appendChild(d);
}
add('corner', '');
for (let c = 0; c < 21; c++) {
  add('ch' + (c === 2 ? ' sel' : '') + (c === 20 ? ' last' : ''), String.fromCharCode(65 + c));
}
for (let r = 0; r < 25; r++) {
  add('rh' + (r === 2 ? ' sel' : ''), r + 1);
  for (let c = 0; c < 21; c++) {
    const v = (map[r] || '')[c] || '';
    let cls = 'c';
    if (v === '1') cls += ' wall';
    if (v === '1' && (r === 0 || c === 0)) cls += ' rim';
    if (r === 2 && c === 2) cls += ' active';
    add(cls, v);
  }
}

// Ground grid in perspective: rows are y positions on the right edge
const rows = [729, 667, 607, 550, 496, 443, 391, 340, 291, 244, 198, 153, 109, 67, 26, -14];
function point(y, k) {
  const t = (y - 26) / 703;
  const x = 1043 - 10 * t - (53.2 + 12 * t) * k;
  return (1180 + x / 3).toFixed(1) + ' ' + (570 + (y - (1 + 0.4 * t) * k) / 3).toFixed(1);
}
let d = '';
rows.forEach(y => { d += 'M' + point(y, 0) + 'L' + point(y, 20); });
for (let k = 0; k <= 20; k++) d += 'M' + point(-14, k) + 'L' + point(729, k);
['gridOut', 'gridIn'].forEach(id => {
  const p = document.createElementNS('http://www.w3.org/2000/svg', 'path');
  p.setAttribute('d', d);
  document.getElementById(id).appendChild(p);
});
```
